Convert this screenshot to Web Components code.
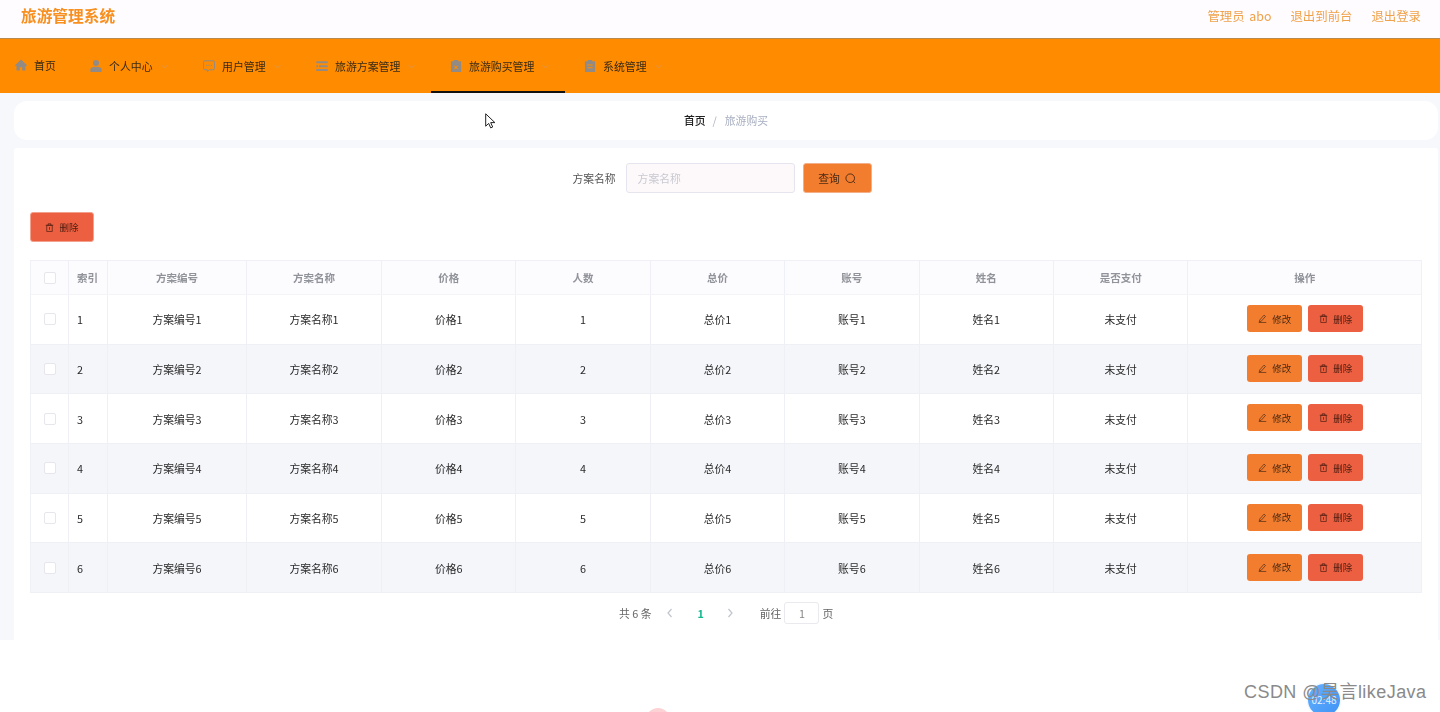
<!DOCTYPE html>
<html lang="zh">
<head>
<meta charset="utf-8">
<title>旅游管理系统</title>
<style>
    html, body { margin: 0; padding: 0; background: #fff; }
    body {
        width: 1440px;
        height: 712px;
        overflow: hidden;
        position: relative;
        font-family: "Noto Sans CJK SC", "Noto Sans", sans-serif;
        font-size: 11px;
        line-height: 14px;
        color: #333;
    }
    #page { filter: blur(0.4px); }
</style>
</head>
<body>
<div id="page">
    <top-bar></top-bar>
    <nav-menu>
        <nav-item icon="home" plain>首页</nav-item>
        <nav-item icon="user">个人中心</nav-item>
        <nav-item icon="chat">用户管理</nav-item>
        <nav-item icon="list" wide>旅游方案管理</nav-item>
        <nav-item icon="clipx" wide active>旅游购买管理</nav-item>
        <nav-item icon="clip">系统管理</nav-item>
    </nav-menu>
    <content-area>
        <bread-crumb></bread-crumb>
        <main-panel>
            <search-form></search-form>
            <div style="height:19px"></div>
            <ui-button kind="danger" icon="trash" size="big">删除</ui-button>
            <data-table></data-table>
            <page-bar></page-bar>
        </main-panel>
    </content-area>
</div>
<floating-marks></floating-marks>

<script>
    // Iconos en SVG, todos con viewBox de 12x12
    const ICONS = {
        home: `<path fill="currentColor" d="M6 .6 0 6.300l.9.9.6-.5v4.800h3.300V8.300h2.400v3.200h3.300V6.700l.6.5.9-.9z"/>`,
        user: `<circle fill="currentColor" cx="6" cy="3" r="3"/><path fill="currentColor" d="M.4 12V9.300C.4 7.600 2.300 6.700 6 6.700s5.600.9 5.600 2.600V12z"/>`,
        chat: `<path fill="none" stroke="currentColor" stroke-width="1" d="M2 .8h8A1.500 1.500 0 0 1 11.500 2.300v6A1.500 1.500 0 0 1 10 9.800H6.500L4.300 11.600V9.800H2A1.500 1.500 0 0 1 .5 8.300v-6A1.500 1.500 0 0 1 2 .8z"/><path fill="currentColor" d="M3.300 4.800h1v1.200h-1zM5.500 4.800h1v1.200h-1zM7.700 4.800h1v1.200h-1z"/>`,
        list: `<path fill="currentColor" d="M.3 1.300h11.400v2H.3zM3 5.200h8.700v2H3zM.3 5.200h1.700v2H.3zM.3 9h11.400v2H.3z"/>`,
        clipx: `<path fill="currentColor" fill-rule="evenodd" d="M3.800 0h4.400v1.300h2.900V12H.9V1.300h2.900zM4.700 5.400l-.7.7L5.300 7.400 4 8.700l.7.7L6 8.100l1.300 1.300.7-.7-1.300-1.300L8 6.100l-.7-.7L6 6.700z"/>`,
        clip: `<path fill="currentColor" fill-rule="evenodd" d="M3.800 0h4.400v1.300h2.900V12H.9V1.300h2.900zM3.300 4.500v1h5.400v-1zM3.300 7.200v1h5.400v-1z"/>`,
        chevron: `<path fill="none" stroke="currentColor" stroke-width="1.400" d="M1 3.500 6 8.500l5-5"/>`,
        search: `<circle fill="none" stroke="currentColor" stroke-width="1" cx="5.700" cy="5.700" r="4.700"/><path fill="none" stroke="currentColor" stroke-width="1" d="m9 9 2 2"/>`,
        trash: `<path fill="none" stroke="currentColor" stroke-width=".9" d="M2.300 3h7.400v8.300H2.300zM1 3h10M4.300 3V1h3.400v2M6 5.500v3.500"/>`,
        edit: `<path fill="none" stroke="currentColor" stroke-width=".9" d="M2.300 8 8 1.500l2 1.700-5.700 6.500-2.500.8zM1 11.300h10"/>`,
    };

    const svgIcon = (name, size) =>
        `<svg width="${size}" height="${size}" viewBox="0 0 12 12" style="display:block;flex:none">${ICONS[name]}</svg>`;

    class TopBar extends HTMLElement {
        constructor() {
            super();
            this.attachShadow({ mode: "open" }).innerHTML = `
                <style>
                    :host {
                        display: flex;
                        align-items: center;
                        justify-content: space-between;
                        box-sizing: border-box;
                        height: 39px;
                        padding: 0 19px 7px 21px;
                        background: #fefcff;
                        border-bottom: 1px solid #b98a4e;
                    }
                    .title { font-size: 15.700px; font-weight: bold; color: #f79020; line-height: 20px; }
                    .links { display: flex; gap: 19px; font-size: 12.400px; line-height: 16px; color: #f0a24a; word-spacing: 2px; }
                </style>
                <div class="title">旅游管理系统</div>
                <div class="links">
                    <span>管理员 abo</span><span>退出到前台</span><span>退出登录</span>
                </div>`;
        }
    }

    class NavMenu extends HTMLElement {
        constructor() {
            super();
            this.attachShadow({ mode: "open" }).innerHTML = `
                <style>
                    :host { display: flex; height: 54px; background: #ff8c00; }
                </style>
                <slot></slot>`;
        }
    }

    class NavItem extends HTMLElement {
        constructor() {
            super();
            const plain = this.hasAttribute("plain");
            this.attachShadow({ mode: "open" }).innerHTML = `
                <style>
                    :host {
                        display: flex;
                        align-items: center;
                        box-sizing: border-box;
                        width: 113px;
                        height: 54px;
                        padding-left: 19px;
                        color: #3a2a14;
                        font-size: 10.900px;
                    }
                    :host([wide]) { width: 134px; }
                    :host([plain]) { width: 71px; padding: 0 0 2px 15px; }
                    :host([active]) { box-shadow: inset 0 -2px 0 #111; }
                    .ic { color: #928a84; margin-right: 7px; }
                    .chev { color: #d8975a; margin-left: 8px; }
                </style>
                <span class="ic">${svgIcon(this.getAttribute("icon"), 12)}</span>
                <slot></slot>
                ${plain ? "" : `<span class="chev">${svgIcon("chevron", 7)}</span>`}`;
        }
    }

    class ContentArea extends HTMLElement {
        constructor() {
            super();
            this.attachShadow({ mode: "open" }).innerHTML = `
                <style>
                    :host {
                        display: flex;
                        flex-direction: column;
                        gap: 8px;
                        box-sizing: border-box;
                        height: 547px;
                        padding: 8px 2px 0 14px;
                        background: #f7f8fc;
                    }
                </style>
                <slot></slot>`;
        }
    }

    class BreadCrumb extends HTMLElement {
        constructor() {
            super();
            this.attachShadow({ mode: "open" }).innerHTML = `
                <style>
                    :host {
                        display: flex;
                        align-items: center;
                        justify-content: center;
                        height: 39px;
                        padding-bottom: 1px;
                        box-sizing: border-box;
                        background: #fff;
                        border-radius: 13px;
                        font-size: 10.800px;
                    }
                    b { color: #222; font-weight: 500; }
                    i { font-style: normal; color: #aeb2bc; margin: 0 8px 0 7px; }
                    span { color: #a8afc0; }
                </style>
                <b>首页</b><i>/</i><span>旅游购买</span>`;
        }
    }

    class MainPanel extends HTMLElement {
        constructor() {
            super();
            this.attachShadow({ mode: "open" }).innerHTML = `
                <style>
                    :host {
                        display: block;
                        flex: 1;
                        box-sizing: border-box;
                        padding: 15px 17px 0 16px;
                        background: #fff;
                        border-radius: 3px 3px 0 0;
                    }
                </style>
                <slot></slot>`;
        }
    }

    class UiButton extends HTMLElement {
        constructor() {
            super();
            this.attachShadow({ mode: "open" }).innerHTML = `
                <style>
                    :host {
                        display: inline-flex;
                        align-items: center;
                        justify-content: center;
                        gap: 5px;
                        box-sizing: border-box;
                        width: 55px;
                        height: 27px;
                        border-radius: 3px;
                        background: #f27d2e;
                        color: #4a2a14;
                        font-size: 9.500px;
                        vertical-align: top;
                    }
                    :host([kind="danger"]) { background: #ec5f40; color: #4a1c10; }
                    :host([size="big"]) { width: 64px; height: 30px; border: 1px solid #f3a08c; }
                    :host([size="search"]) {
                        width: 69px;
                        height: 30px;
                        font-size: 10.800px;
                        flex-direction: row-reverse;
                        border: 1px solid #f3b088;
                    }
                </style>
                ${svgIcon(this.getAttribute("icon"), this.getAttribute("size") === "search" ? 11 : 9)}
                <slot></slot>`;
        }
    }

    class SearchForm extends HTMLElement {
        constructor() {
            super();
            this.attachShadow({ mode: "open" }).innerHTML = `
                <style>
                    :host {
                        display: flex;
                        align-items: center;
                        justify-content: center;
                        padding-right: 7px;
                        height: 30px;
                        font-size: 10.800px;
                        color: #555;
                    }
                    .box {
                        box-sizing: border-box;
                        width: 169px;
                        height: 30px;
                        margin: 0 8px 0 10px;
                        padding-left: 11px;
                        line-height: 28px;
                        background: #fdf9fa;
                        border: 1px solid #e6e4ee;
                        border-radius: 3px;
                        color: #c9c9d2;
                    }
                </style>
                <span>方案名称</span>
                <div class="box">方案名称</div>
                <ui-button icon="search" size="search">查询</ui-button>`;
        }
    }

    // Datos de ejemplo para la tabla
    const COLUMNS = [
        ["", 38], ["索引", 39], ["方案编号", 139], ["方案名称", 135], ["价格", 134.400], ["人数", 134.400],
        ["总价", 134.400], ["账号", 134.400], ["姓名", 134.400], ["是否支付", 134.400], ["操作", 232.600],
    ];
    const ROWS = [1, 2, 3, 4, 5, 6].map((n) => [
        "", n, `方案编号${n}`, `方案名称${n}`, `价格${n}`, n, `总价${n}`, `账号${n}`, `姓名${n}`, "未支付", "",
    ]);

    class DataTable extends HTMLElement {
        constructor() {
            super();
            const shadow = this.attachShadow({ mode: "open" });
            const tracks = COLUMNS.map((c) => c[1] + "px").join(" ");
            const check = `<span class="check"></span>`;
            const actions = `<ui-button icon="edit">修改</ui-button><ui-button kind="danger" icon="trash">删除</ui-button>`;
            const head = COLUMNS.map((c, i) =>
                `<div class="cell ${i === 1 ? "left" : ""}">${i === 0 ? check : c[0]}</div>`).join("");
            const body = ROWS.map((row) => `
                <div class="row">
                    ${row.map((v, i) => {
                        if (i === 0) return `<div class="cell">${check}</div>`;
                        if (i === 10) return `<div class="cell ops">${actions}</div>`;
                        return `<div class="cell ${i === 1 ? "left" : ""}">${v}</div>`;
                    }).join("")}
                </div>`).join("");
            shadow.innerHTML = `
                <style>
                    :host {
                        display: block;
                        margin-top: 18px;
                        width: 1392px;
                        border: 1px solid #f0f1f6;
                        border-bottom: 0;
                        box-sizing: border-box;
                        font-size: 10.800px;
                        color: #2a2a2a;
                    }
                    .row {
                        display: grid;
                        grid-template-columns: ${tracks};
                        height: 49.700px;
                        box-sizing: border-box;
                        border-bottom: 1px solid #eff0f5;
                    }
                    .row:nth-child(even) { background: #f5f6fa; }
                    .row.head {
                        height: 34px;
                        background: #fcfbfe;
                        color: #909399;
                        font-weight: bold;
                        font-size: 10.500px;
                        border-bottom: 1px solid #f4f4f8;
                    }
                    .cell {
                        display: flex;
                        align-items: center;
                        justify-content: center;
                        border-right: 1px solid #eff0f5;
                    }
                    .cell:last-child { border-right: 0; }
                    .cell.left { justify-content: flex-start; padding-left: 8px; }
                    .cell.ops { gap: 6px; padding: 0 0 1.500px 1px; }
                    .check {
                        width: 10px;
                        height: 10px;
                        background: #fff;
                        border: 1px solid #e6e6ec;
                        border-radius: 2px;
                    }
                </style>
                <div class="row head">${head}</div>
                ${body}`;
        }
    }

    class PageBar extends HTMLElement {
        constructor() {
            super();
            this.attachShadow({ mode: "open" }).innerHTML = `
                <style>
                    :host {
                        display: flex;
                        align-items: center;
                        height: 22px;
                        margin-top: 9px;
                        padding-left: 589px;
                        font-size: 10.800px;
                        color: #666;
                    }
                    svg { color: #c0c4cc; }
                    .prev { margin-left: 15px; }
                    .cur { margin: 0 22px 0 23px; color: #14b88f; font-weight: bold; }
                    .box {
                        box-sizing: border-box;
                        width: 35px;
                        height: 22px;
                        margin: 0 3px;
                        line-height: 20px;
                        text-align: center;
                        border: 1px solid #e9e9ee;
                        border-radius: 3px;
                        color: #888;
                    }
                </style>
                <span>共 6 条</span>
                <svg class="prev" width="8" height="10" viewBox="0 0 8 10"><path fill="none" stroke="currentColor" stroke-width="1.200" d="M5.500 1 2 5l3.500 4"/></svg>
                <span class="cur">1</span>
                <svg width="8" height="10" viewBox="0 0 8 10"><path fill="none" stroke="currentColor" stroke-width="1.200" d="M2.500 1 6 5 2.500 9"/></svg>
                <span style="margin-left:26px">前往</span>
                <div class="box">1</div>
                <span>页</span>`;
        }
    }

    // Lo que queda encima de la pagina: cursor, reproductor y marca de agua
    class FloatingMarks extends HTMLElement {
        constructor() {
            super();
            this.attachShadow({ mode: "open" }).innerHTML = `
                <style>
                    :host { display: block; position: absolute; inset: 0; pointer-events: none; overflow: hidden; }
                    .cursor { position: absolute; left: 485px; top: 113px; }
                    .pink {
                        position: absolute; left: 646px; top: 708px;
                        width: 24px; height: 24px; border-radius: 50%;
                        background: #fdd2d4;
                    }
                    .blue {
                        position: absolute; left: 1308px; top: 684px;
                        width: 32px; height: 32px; border-radius: 50%;
                        background: linear-gradient(135deg, #66b1ff, #3d92f5);
                        box-shadow: 0 0 3px #d4e6fb;
                        color: #e8f2ff; font-size: 10px; line-height: 32px; text-align: center;
                    }
                    .mark {
                        position: absolute; left: 1244px; top: 681px;
                        font-family: "Liberation Sans", "Noto Sans CJK SC", sans-serif;
                        font-size: 18px; line-height: 22px; color: #8a8a8a;
                        white-space: nowrap; letter-spacing: .45px;
                    }
                </style>
                <svg class="cursor" width="12" height="17" viewBox="0 0 12 17">
                    <path fill="#fff" stroke="#222" stroke-width="1" d="M.7.8v12.400l3-2.800 2 4.500 2-.9-2-4.400h4.200z"/>
                </svg>
                <div class="pink"></div>
                <div class="blue">02:48</div>
                <div class="mark">CSDN @昊言likeJava</div>`;
        }
    }

    customElements.define("top-bar", TopBar);
    customElements.define("nav-menu", NavMenu);
    customElements.define("nav-item", NavItem);
    customElements.define("content-area", ContentArea);
    customElements.define("bread-crumb", BreadCrumb);
    customElements.define("main-panel", MainPanel);
    customElements.define("ui-button", UiButton);
    customElements.define("search-form", SearchForm);
    customElements.define("data-table", DataTable);
    customElements.define("page-bar", PageBar);
    customElements.define("floating-marks", FloatingMarks);
</script>
</body>
</html>
